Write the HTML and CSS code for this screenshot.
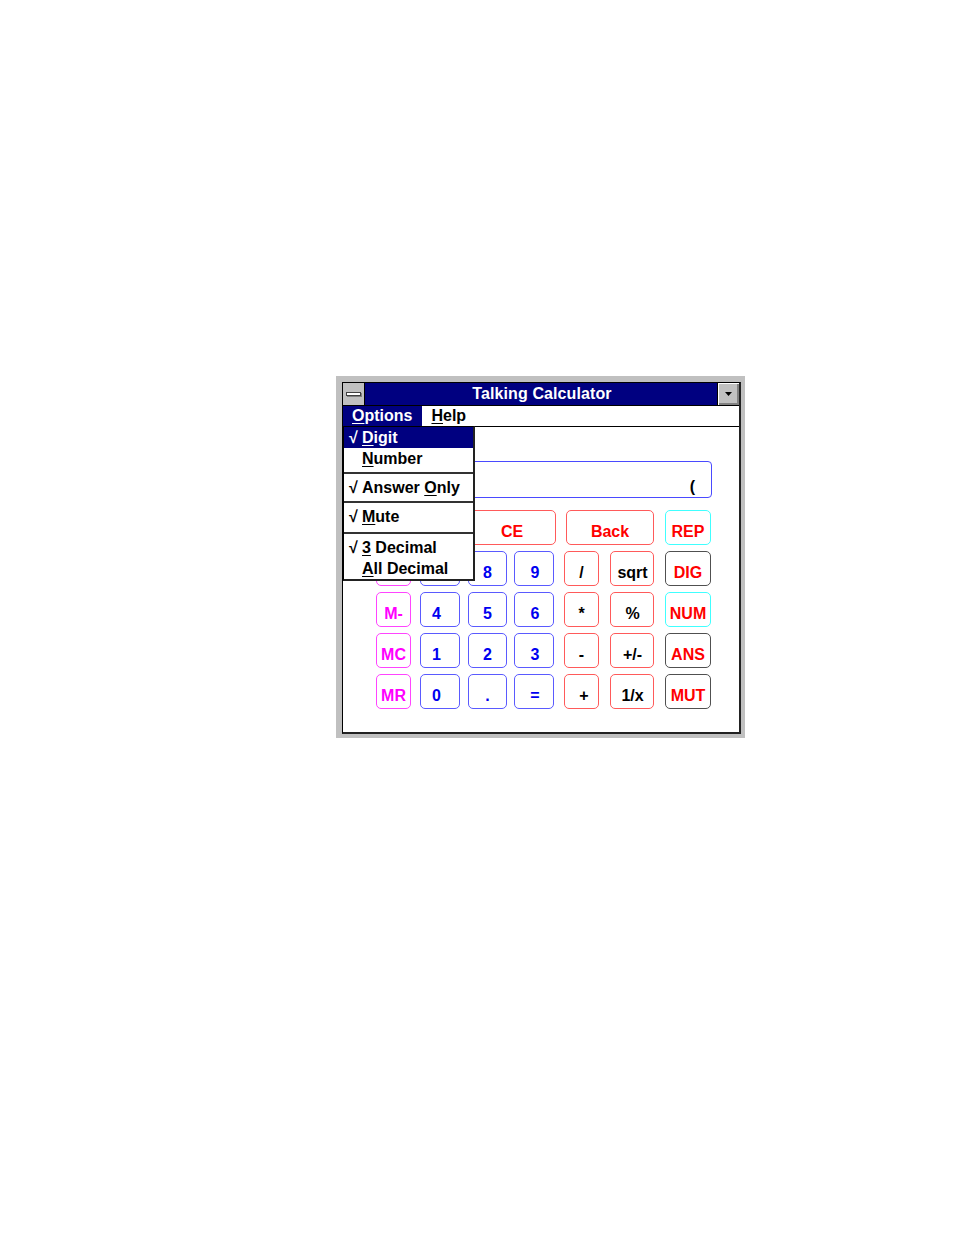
FILE: index.html
```html
<!DOCTYPE html>
<html>
<head>
<meta charset="utf-8">
<title>Talking Calculator</title>
<link rel="stylesheet" href="styles.css">
</head>
<body>
<div class="page">
  <div class="window">
    <div class="inner">
      <div class="titlebar">
        <div class="sysbox"><span class="sysbar"></span></div>
        <div class="title">Talking Calculator</div>
        <div class="minbox">
          <svg width="7" height="4" viewBox="0 0 7 4"><path d="M0 0H7L3.5 4Z" fill="#000"/></svg>
        </div>
      </div>
      <div class="menubar">
        <span class="mitem active"><u>O</u>ptions</span>
        <span class="mitem"><u>H</u>elp</span>
      </div>
      <div class="client">
        <div class="display"><span class="readout">(</span></div>
        <div class="keys">
          <div class="key red w-wide2"></div>
          <div class="key red w-wide red-t">CE</div>
          <div class="key red w-wide back red-t">Back</div>
          <div class="key cyan c7">REP</div>

          <div class="key mag c1"></div>
          <div class="key blue c2"></div>
          <div class="key blue c3">8</div>
          <div class="key blue c4">9</div>
          <div class="key red c5">/</div>
          <div class="key red c6">sqrt</div>
          <div class="key dark c7">DIG</div>

          <div class="key mag c1">M-</div>
          <div class="key blue c2">4</div>
          <div class="key blue c3">5</div>
          <div class="key blue c4">6</div>
          <div class="key red c5">*</div>
          <div class="key red c6">%</div>
          <div class="key cyan c7">NUM</div>

          <div class="key mag c1">MC</div>
          <div class="key blue c2">1</div>
          <div class="key blue c3">2</div>
          <div class="key blue c4">3</div>
          <div class="key red c5">-</div>
          <div class="key red c6">+/-</div>
          <div class="key dark c7">ANS</div>

          <div class="key mag c1">MR</div>
          <div class="key blue c2">0</div>
          <div class="key blue c3">.</div>
          <div class="key blue c4">=</div>
          <div class="key red c5 plus">+</div>
          <div class="key red c6">1/x</div>
          <div class="key dark c7">MUT</div>
        </div>
      </div>

      <div class="dropdown">
        <div class="ditem sel"><span class="chk">&#8730;</span><span class="lbl"><u>D</u>igit</span></div>
        <div class="ditem"><span class="chk"></span><span class="lbl"><u>N</u>umber</span></div>
        <div class="dsep"></div>
        <div class="ditem"><span class="chk">&#8730;</span><span class="lbl">Answer <u>O</u>nly</span></div>
        <div class="dsep"></div>
        <div class="ditem"><span class="chk">&#8730;</span><span class="lbl"><u>M</u>ute</span></div>
        <div class="dsep last"></div>
        <div class="ditem"><span class="chk">&#8730;</span><span class="lbl"><u>3</u> Decimal</span></div>
        <div class="ditem"><span class="chk"></span><span class="lbl"><u>A</u>ll Decimal</span></div>
      </div>
    </div>
  </div>
</div>
</body>
</html>
```

FILE: styles.css
```css
html, body {
  margin: 0;
  padding: 0;
  background: #ffffff;
}

body {
  font-family: "Liberation Sans", Arial, sans-serif;
  font-weight: bold;
  font-size: 16px;
  color: #000;
}

.page {
  padding: 376px 0 0 336px;
}

.window {
  width: 409px;
  height: 362px;
  box-sizing: border-box;
  background: #c0c0c0;
  padding: 6px 4px 4px 6px;
}

.inner {
  position: relative;
  height: 100%;
  box-sizing: border-box;
  background: #ffffff;
  border-left: 1px solid #000;
  border-top: 1px solid #000;
  border-right: 2px solid #222;
  border-bottom: 2px solid #222;
  display: flex;
  flex-direction: column;
}

/* title bar */
.titlebar {
  height: 22px;
  border-bottom: 1px solid #000;
  display: flex;
  flex: none;
}

.sysbox {
  width: 21px;
  background: #c0c0c0;
  border-right: 1px solid #000;
  display: flex;
  align-items: center;
  justify-content: center;
}

.sysbar {
  display: block;
  width: 13px;
  height: 2px;
  background: #fff;
  border: 1px solid #404040;
  box-shadow: 1px 1px 0 #808080;
  margin-top: -1px;
}

.title {
  flex: 1;
  background: #000080;
  color: #fff;
  text-align: center;
  line-height: 22px;
  padding-left: 2px;
  letter-spacing: 0.1px;
}

.minbox {
  width: 22px;
  box-sizing: border-box;
  border-left: 1px solid #000;
  background: #c0c0c0;
  box-shadow: inset 1px 1px 0 #fff, inset -2px -2px 0 #808080;
  display: flex;
  align-items: center;
  justify-content: center;
}

.minbox svg {
  display: block;
  margin: -1px 0 0 0;
}

/* menu bar */
.menubar {
  height: 20px;
  border-bottom: 1px solid #000;
  display: flex;
  flex: none;
}

.mitem {
  line-height: 20px;
  padding: 0 10px 0 9px;
}

.mitem.active {
  background: #000080;
  color: #fff;
}

u {
  text-decoration: underline;
  text-decoration-thickness: 1px;
  text-underline-offset: 2px;
}

/* client */
.client {
  flex: 1;
  padding: 34px 0 0 33px;
}

.display {
  width: 336px;
  height: 37px;
  box-sizing: border-box;
  border: 1px solid #4a4aff;
  border-radius: 4px;
  display: flex;
  align-items: flex-end;
  justify-content: flex-end;
  padding: 0 16px 2px 0;
}

.readout {
  line-height: 16px;
}

.keys {
  margin-top: 12px;
  display: grid;
  grid-template-columns: 44px 48px 46px 50px 46px 55px 46px;
  grid-auto-rows: 35px;
  row-gap: 6px;
}

.key {
  box-sizing: border-box;
  border: 1px solid;
  border-radius: 5px;
  display: flex;
  align-items: center;
  justify-content: center;
  padding-top: 9px;
  justify-self: start;
}

.c1 { width: 35px; }
.c2 { width: 40px; padding-right: 7px; }
.c3 { width: 39px; }
.c4 { width: 40px; padding-left: 2px; }
.c5 { width: 35px; }
.c6 { width: 44px; padding-left: 1px; }
.c7 { width: 46px; }

.plus { padding-left: 5px; }

.w-wide2 {
  grid-column: span 2;
  width: 84px;
}

.w-wide {
  grid-column: span 2;
  width: 88px;
}

.back {
  margin-left: 2px;
  width: 88px;
}

.blue {
  border-color: #5a5aff;
  color: #0000f0;
}

.red {
  border-color: #ff5a5a;
  color: #000;
}

.red-t {
  color: #ff0000;
}

.cyan {
  border-color: #40ffff;
  color: #ff0000;
}

.dark {
  border-color: #505050;
  color: #ff0000;
}

.mag {
  border-color: #ff44ff;
  color: #ff00ff;
}

/* dropdown menu */
.dropdown {
  position: absolute;
  left: 0;
  top: 43px;
  width: 132px;
  box-sizing: border-box;
  background: #fff;
  border-top: 1px solid #000;
  border-left: 1px solid #000;
  border-right: 2px solid #222;
  border-bottom: 2px solid #222;
}

.ditem {
  height: 21px;
  line-height: 21px;
  padding-left: 5px;
  white-space: nowrap;
}

.ditem.sel {
  background: #000080;
  color: #fff;
}

.chk {
  display: inline-block;
  width: 13px;
  font-weight: bold;
}

.dsep {
  height: 8px;
  box-sizing: border-box;
  padding-top: 3px;
}

.dsep::before {
  content: "";
  display: block;
  height: 2px;
  background: #333;
}

.dsep.last {
  height: 10px;
  padding-top: 5px;
}
```
